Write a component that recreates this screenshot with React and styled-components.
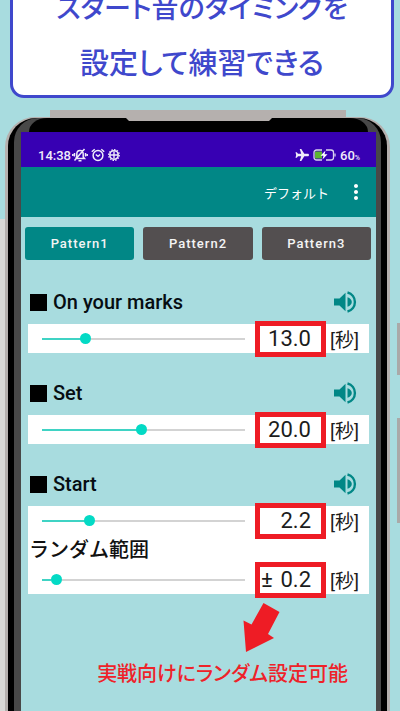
import React, { useState } from 'react'
import styled, { createGlobalStyle } from 'styled-components'
import { MdMoreVert } from 'react-icons/md'

const GlobalStyle = createGlobalStyle`
  * {
    box-sizing: border-box;
  }
  body {
    margin: 0;
    background: #a8dcdf;
    font-family: Roboto, 'Noto Sans CJK JP', sans-serif;
  }
  button, input {
    font-family: inherit;
  }
`

const Page = styled.main`
  display: flex;
  flex-direction: column;
  height: 100vh;
  overflow: hidden;
`

const Banner = styled.h1`
  flex: none;
  margin: -32px 6px 12px 10px;
  padding: 9px 0 7px;
  border: 3px solid #3f48cc;
  border-radius: 14px;
  background: #fff;
  color: #3f48cc;
  font-family: 'Noto Sans CJK JP', sans-serif;
  font-weight: 500;
  text-align: center;
  white-space: nowrap;
`

const BannerLine = styled.span`
  display: block;
  font-size: ${({ $large }) => ($large ? 29 : 27)}px;
  font-feature-settings: 'palt';
  line-height: 54px;
`

const BackEdge = styled.div`
  flex: none;
  height: 7px;
  margin: 0 54px 0 50px;
  background: #b5b0ae;
`

const Device = styled.div`
  display: flex;
  flex: 1;
`

const LeftEdge = styled.div`
  width: 5px;
  margin-top: 102px;
  background: #d9d9d7;
`

const RightEdge = styled.div`
  display: flex;
  flex-direction: column;
  align-items: flex-end;
  gap: 43px;
  width: 10px;
  padding-top: 206px;
`

const SideKey = styled.div`
  width: 3px;
  height: ${({ $long }) => ($long ? 105 : 52)}px;
  background: #aaa9a8;
`

const Shell = styled.div`
  position: relative;
  display: flex;
  flex: 1;
  padding: 1px 3px 0;
  border-radius: 30px 30px 0 0;
  background: #b5b0ae;
`

const Notch = styled.div`
  position: absolute;
  top: 0;
  left: 120px;
  right: 117px;
  height: 4px;
  background: #b5b0ae;
  clip-path: polygon(0 0, 100% 0, calc(100% - 4px) 100%, 4px 100%);
`

const Rim = styled.div`
  display: flex;
  flex: 1;
  padding: 0 6px;
  border-radius: 28px 28px 0 0;
  background: #000;
`

const InnerRim = styled.div`
  display: flex;
  flex: 1;
  flex-direction: column;
  padding: 0 5px 0 7px;
  border-radius: 24px 24px 0 0;
  background: #484848;
`

const Bezel = styled.div`
  height: 14px;
  margin: 0 8px;
  border-radius: 18px 18px 0 0 / 14px 14px 0 0;
  background: #000;
`

const Screen = styled.div`
  flex: 1;
  background: #a8dcdf;
`

const StatusBar = styled.div`
  display: flex;
  align-items: center;
  height: 35px;
  padding: 11px 16px 0 17px;
  background: #3700b3;
  color: #f0ecfa;
  font-size: 13px;
  font-weight: 500;
`

const StatusIcons = styled.div`
  display: flex;
  flex: 1;
  align-items: center;
  gap: 3px;
  margin-left: 1px;
`

const Charge = styled.div`
  display: flex;
  align-items: center;
  gap: 4px;
`

const Percent = styled.small`
  font-size: 7px;
`

const AppBar = styled.header`
  display: flex;
  align-items: center;
  justify-content: flex-end;
  gap: 15px;
  height: 50px;
  padding-right: 8px;
  background: #018786;
`

const BarButton = styled.button`
  display: flex;
  padding: 0;
  border: 0;
  background: none;
  color: #fff;
  font-size: 13px;
`

const Tabs = styled.nav`
  display: flex;
  gap: 9px;
  padding: 10px 5px 20px 4px;
`

const Tab = styled.button`
  flex: 1;
  height: 33px;
  padding: 0;
  border: 0;
  border-radius: 3px;
  background: ${({ $active }) => ($active ? '#018786' : '#534f50')};
  color: #f4f4f4;
  font-size: 13px;
  font-weight: 500;
  letter-spacing: 1px;
`

const Section = styled.section`
  margin: 0 7px 18px;
`

const SectionHead = styled.div`
  display: flex;
  align-items: center;
  justify-content: space-between;
  height: 44px;
  padding-right: 12px;
`

const SectionTitle = styled.h2`
  display: flex;
  align-items: center;
  gap: 6px;
  margin: 0;
  padding-left: 2px;
  color: #060d12;
  font-size: 20px;
  font-weight: 500;
`

const Square = styled.span`
  width: 17px;
  height: 17px;
  background: #000;
`

const SoundButton = styled.button`
  display: flex;
  padding: 0;
  border: 0;
  background: none;
  color: #018786;
`

const Panel = styled.div`
  background: #fff;
`

const Row = styled.div`
  display: flex;
  align-items: center;
  height: 29px;
  padding: 0 11px 0 14px;
`

const Slider = styled.input`
  flex: 1;
  min-width: 0;
  height: 11px;
  margin: 0 10px 0 0;
  appearance: none;
  background: linear-gradient(
      to right,
      #3fd3c4 var(--filled),
      #d3d3d3 var(--filled)
    )
    center / 100% 2px no-repeat;

  &::-webkit-slider-thumb {
    appearance: none;
    width: 11px;
    height: 11px;
    border-radius: 50%;
    background: #03dac5;
  }
`

const ValueBox = styled.label`
  display: flex;
  flex: none;
  align-items: center;
  width: 71px;
  height: 36px;
  padding: 0 10px 0 1px;
  border: 5px solid #ee1c25;
  background: #fff;
  color: #1c1c1c;
  font-size: 22px;
`

const ValueInput = styled.input`
  flex: 1;
  min-width: 0;
  padding: 0;
  border: 0;
  background: none;
  color: inherit;
  font-size: inherit;
  text-align: right;
`

const Unit = styled.span`
  flex: none;
  width: 28px;
  margin-left: 4px;
  color: #1c1c1c;
  font-size: 19px;
  white-space: nowrap;
`

const RangeLabel = styled.h3`
  margin: 0;
  padding-left: 1px;
  color: #111;
  font-size: 20px;
  font-weight: 500;
  line-height: 30px;
`

const Callout = styled.div`
  display: flex;
  flex-direction: column;
  align-items: flex-end;
  margin-top: -9px;
  padding-right: 28px;
`

const CalloutArrow = styled.svg`
  width: 37px;
  height: 49px;
  margin-right: 68px;
`

const CalloutText = styled.p`
  margin: 6px 0 0;
  color: #ee2229;
  font-family: 'Noto Sans CJK JP', sans-serif;
  font-size: 20px;
  font-weight: 500;
  line-height: 30px;
  font-feature-settings: 'palt';
  white-space: nowrap;
`

const MutedBellIcon = () => (
  <svg width='16' height='14' viewBox='0 0 16 14' fill='none' stroke='currentColor' strokeWidth='1.5'>
    <path d='M4 10.500h8.500l-1.300-1.500V6c0-2-1.200-3.500-3.200-3.500S4.800 4 4.800 6v3l-1 1.500M6.500 12.700h3M2.500 12.500 12.500 1M2.500 5v3.500M.8 6v2M13.500 5v3.500M15.200 6v2' />
  </svg>
)

const AlarmIcon = () => (
  <svg width='14' height='14' viewBox='0 0 14 14' fill='none' stroke='currentColor' strokeWidth='1.5'>
    <circle cx='7' cy='7.5' r='4.900' />
    <path d='M.8 3.700 3.700 1.200M13.200 3.700l-2.900-2.500M4.800 6.500 7 8.300l2.200-1.800' />
  </svg>
)

const GlobeGearIcon = () => (
  <svg width='12' height='12' viewBox='0 0 12 12' fill='none' stroke='currentColor'>
    <circle cx='6' cy='6' r='4.200' strokeWidth='1.500' />
    <circle cx='6' cy='6' r='5.300' strokeWidth='1.200' strokeDasharray='1.600 1.100' />
    <path d='M2 6h8M6 2.500v7' strokeWidth='1.400' />
  </svg>
)

const PlaneIcon = () => (
  <svg width='14' height='12' viewBox='0 0 14 12' fill='currentColor'>
    <path d='M14 6c0-.8-.6-1.300-1.400-1.300H9.300L6.300 0H4.700l1.500 4.700H3L1.800 3.200H.5L1.200 6 .5 8.800h1.300L3 7.300h3.200L4.700 12h1.600l3-4.700h3.300C13.400 7.300 14 6.800 14 6z' />
  </svg>
)

const BatteryIcon = () => (
  <svg width='23' height='12' viewBox='0 0 23 12'>
    <rect x='2' y='2.500' width='7' height='7' fill='#5cb531' />
    <path
      d='M9 1H3.500A2.500 2.500 0 0 0 1 3.500v5A2.500 2.500 0 0 0 3.500 11H9M13 1h5a2.500 2.500 0 0 1 2.500 2.500v5A2.500 2.500 0 0 1 18 11h-5'
      fill='none'
      stroke='#d9d2f0'
      strokeWidth='1.300'
    />
    <path d='M12.500 1.500 7.500 6.700h3L9.500 10.500l5-5.300h-3z' fill='#fff' />
    <path d='M22 4.500v3' stroke='#d9d2f0' strokeWidth='1.300' />
  </svg>
)

const SpeakerIcon = () => (
  <svg width='23' height='22' viewBox='0 0 23 22' fill='currentColor'>
    <path d='M0 7.500h5.500L11.500 1.800v18.400L5.500 14.500H0zM13.500 6.200c2.700 1 4.300 2.600 4.300 4.800s-1.600 3.800-4.300 4.800z' />
    <path
      d='M13.500 1.500C18 2.600 20.900 6.400 20.900 11s-2.900 8.400-7.400 9.500'
      fill='none'
      stroke='currentColor'
      strokeWidth='2.400'
    />
  </svg>
)

const Timing = ({ label, initial, max, sign }) => {
  const [value, setValue] = useState(initial)
  const filled = (value / max) * 100

  return (
    <Row>
      <Slider
        type='range'
        min='0'
        max={max}
        step='0.1'
        value={value}
        aria-label={label}
        style={{ '--filled': `${filled}%` }}
        onChange={e => setValue(Number(e.target.value))}
      />
      <ValueBox>
        {sign}
        <ValueInput
          type='text'
          aria-label={`${label} 秒`}
          value={value.toFixed(1)}
          onChange={e => setValue(Number(e.target.value) || 0)}
        />
      </ValueBox>
      <Unit>[秒]</Unit>
    </Row>
  )
}

const SoundSection = ({ title, children }) => (
  <Section>
    <SectionHead>
      <SectionTitle>
        <Square />
        {title}
      </SectionTitle>
      <SoundButton aria-label={title}>
        <SpeakerIcon />
      </SoundButton>
    </SectionHead>
    <Panel>{children}</Panel>
  </Section>
)

const patterns = ['Pattern1', 'Pattern2', 'Pattern3']

const App = () => {
  const [active, setActive] = useState('Pattern1')

  return (
    <Page>
      <GlobalStyle />
      <Banner>
        <BannerLine>スタート音のタイミングを</BannerLine>
        <BannerLine $large>設定して練習できる</BannerLine>
      </Banner>
      <BackEdge />
      <Device>
        <LeftEdge />
        <Shell>
          <Notch />
          <Rim>
            <InnerRim>
              <Bezel />
              <Screen>
                <StatusBar>
                  14:38
                  <StatusIcons>
                    <MutedBellIcon />
                    <AlarmIcon />
                    <GlobeGearIcon />
                  </StatusIcons>
                  <Charge>
                    <PlaneIcon />
                    <BatteryIcon />
                    <span>
                      60<Percent>%</Percent>
                    </span>
                  </Charge>
                </StatusBar>
                <AppBar>
                  <BarButton>デフォルト</BarButton>
                  <BarButton aria-label='メニュー'>
                    <MdMoreVert size={24} />
                  </BarButton>
                </AppBar>
                <Tabs>
                  {patterns.map(name => (
                    <Tab
                      key={name}
                      $active={name === active}
                      onClick={() => setActive(name)}
                    >
                      {name}
                    </Tab>
                  ))}
                </Tabs>
                <SoundSection title='On your marks'>
                  <Timing label='On your marks' initial={13} max={65} />
                </SoundSection>
                <SoundSection title='Set'>
                  <Timing label='Set' initial={20} max={41} />
                </SoundSection>
                <SoundSection title='Start'>
                  <Timing label='Start' initial={2.2} max={10} />
                  <RangeLabel>ランダム範囲</RangeLabel>
                  <Timing label='ランダム範囲' initial={0.2} max={4.5} sign='±' />
                </SoundSection>
                <Callout>
                  <CalloutArrow viewBox='0 0 37 49' fill='#ee1c25'>
                    <path d='M20.500 0 36.500 9 25 31l6 4L3 49 .5 17.500l8 4z' />
                  </CalloutArrow>
                  <CalloutText>実戦向けにランダム設定可能</CalloutText>
                </Callout>
              </Screen>
            </InnerRim>
          </Rim>
        </Shell>
        <RightEdge>
          <SideKey />
          <SideKey $long />
        </RightEdge>
      </Device>
    </Page>
  )
}

export default App
